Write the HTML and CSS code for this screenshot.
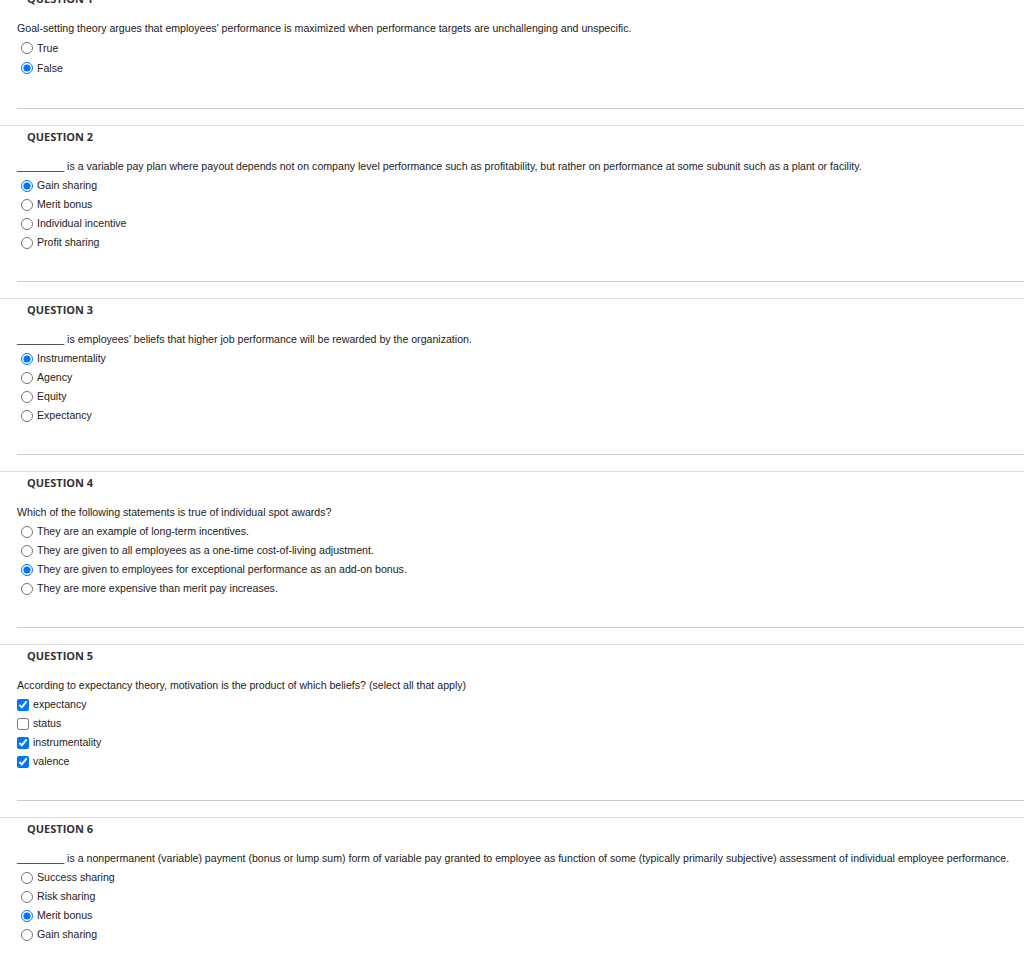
FILE: index.html
```html
<!DOCTYPE html>
<html lang="en">
<head>
  <meta charset="UTF-8" />
  <title>Quiz</title>
  <link rel="stylesheet" href="styles.css">
</head>
<body>

<div class="quiz">

  <!-- Question 1 -->
  <div class="question q-first">
    <h3 class="q-title">QUESTION 1</h3>
    <p class="q-text">Goal-setting theory argues that employees' performance is maximized when performance targets are unchallenging and unspecific.</p>
    <ul class="answers">
      <li><label><input type="radio" name="q1">True</label></li>
      <li><label><input type="radio" name="q1" checked>False</label></li>
    </ul>
    <hr class="inner-line">
  </div>
  <hr class="outer-line">

  <!-- Question 2 -->
  <div class="question">
    <h3 class="q-title">QUESTION 2</h3>
    <p class="q-text">________ is a variable pay plan where payout depends not on company level performance such as profitability, but rather on performance at some subunit such as a plant or facility.</p>
    <ul class="answers">
      <li><label><input type="radio" name="q2" checked>Gain sharing</label></li>
      <li><label><input type="radio" name="q2">Merit bonus</label></li>
      <li><label><input type="radio" name="q2">Individual incentive</label></li>
      <li><label><input type="radio" name="q2">Profit sharing</label></li>
    </ul>
    <hr class="inner-line">
  </div>
  <hr class="outer-line">

  <!-- Question 3 -->
  <div class="question">
    <h3 class="q-title">QUESTION 3</h3>
    <p class="q-text">________ is employees' beliefs that higher job performance will be rewarded by the organization.</p>
    <ul class="answers">
      <li><label><input type="radio" name="q3" checked>Instrumentality</label></li>
      <li><label><input type="radio" name="q3">Agency</label></li>
      <li><label><input type="radio" name="q3">Equity</label></li>
      <li><label><input type="radio" name="q3">Expectancy</label></li>
    </ul>
    <hr class="inner-line">
  </div>
  <hr class="outer-line">

  <!-- Question 4 -->
  <div class="question">
    <h3 class="q-title">QUESTION 4</h3>
    <p class="q-text">Which of the following statements is true of individual spot awards?</p>
    <ul class="answers">
      <li><label><input type="radio" name="q4">They are an example of long-term incentives.</label></li>
      <li><label><input type="radio" name="q4">They are given to all employees as a one-time cost-of-living adjustment.</label></li>
      <li><label><input type="radio" name="q4" checked>They are given to employees for exceptional performance as an add-on bonus.</label></li>
      <li><label><input type="radio" name="q4">They are more expensive than merit pay increases.</label></li>
    </ul>
    <hr class="inner-line">
  </div>
  <hr class="outer-line">

  <!-- Question 5 -->
  <div class="question">
    <h3 class="q-title">QUESTION 5</h3>
    <p class="q-text">According to expectancy theory, motivation is the product of which beliefs? (select all that apply)</p>
    <ul class="answers checks">
      <li><label><input type="checkbox" checked>expectancy</label></li>
      <li><label><input type="checkbox">status</label></li>
      <li><label><input type="checkbox" checked>instrumentality</label></li>
      <li><label><input type="checkbox" checked>valence</label></li>
    </ul>
    <hr class="inner-line">
  </div>
  <hr class="outer-line">

  <!-- Question 6 -->
  <div class="question">
    <h3 class="q-title">QUESTION 6</h3>
    <p class="q-text">________ is a nonpermanent (variable) payment (bonus or lump sum) form of variable pay granted to employee as function of some (typically primarily subjective) assessment of individual employee performance.</p>
    <ul class="answers">
      <li><label><input type="radio" name="q6">Success sharing</label></li>
      <li><label><input type="radio" name="q6">Risk sharing</label></li>
      <li><label><input type="radio" name="q6" checked>Merit bonus</label></li>
      <li><label><input type="radio" name="q6">Gain sharing</label></li>
    </ul>
  </div>

</div>

</body>
</html>
```

FILE: styles.css
```css
body {
  margin: 0;
  background: #fff;
  font-family: "Liberation Sans", Arial, sans-serif;
  font-size: 10.6px;
  color: #222;
}
.quiz { margin-top: -12px; }

.q-title {
  margin: 0;
  padding-left: 27px;
  font-family: "Open Sans", sans-serif;
  font-weight: 700;
  font-size: 11px;
  line-height: 22px;
  color: #333;
}
.q-text {
  margin: 9px 0 0;
  padding-left: 17px;
  line-height: 19px;
  white-space: nowrap;
}

.answers {
  list-style: none;
  margin: 0;
  padding: 0;
}
.answers li { line-height: 19px; height: 19px; }
.answers label {
  display: flex;
  align-items: center;
  white-space: nowrap;
}
.answers input[type="radio"] {
  width: 12px;
  height: 12px;
  margin: 0 4px 0 21px;
}
.answers input[type="checkbox"] {
  width: 12px;
  height: 12px;
  margin: 0 4px 0 17px;
}

.q-first .answers li { height: 20px; line-height: 20px; }

.inner-line {
  margin: 29px 0 16px 17px;
  border: none;
  border-top: 1px solid #ccc;
  height: 0;
}
.q-first .inner-line { margin-top: 30px; }
.outer-line {
  margin: 0;
  border: none;
  border-top: 1px solid #ddd;
  height: 0;
}
```
